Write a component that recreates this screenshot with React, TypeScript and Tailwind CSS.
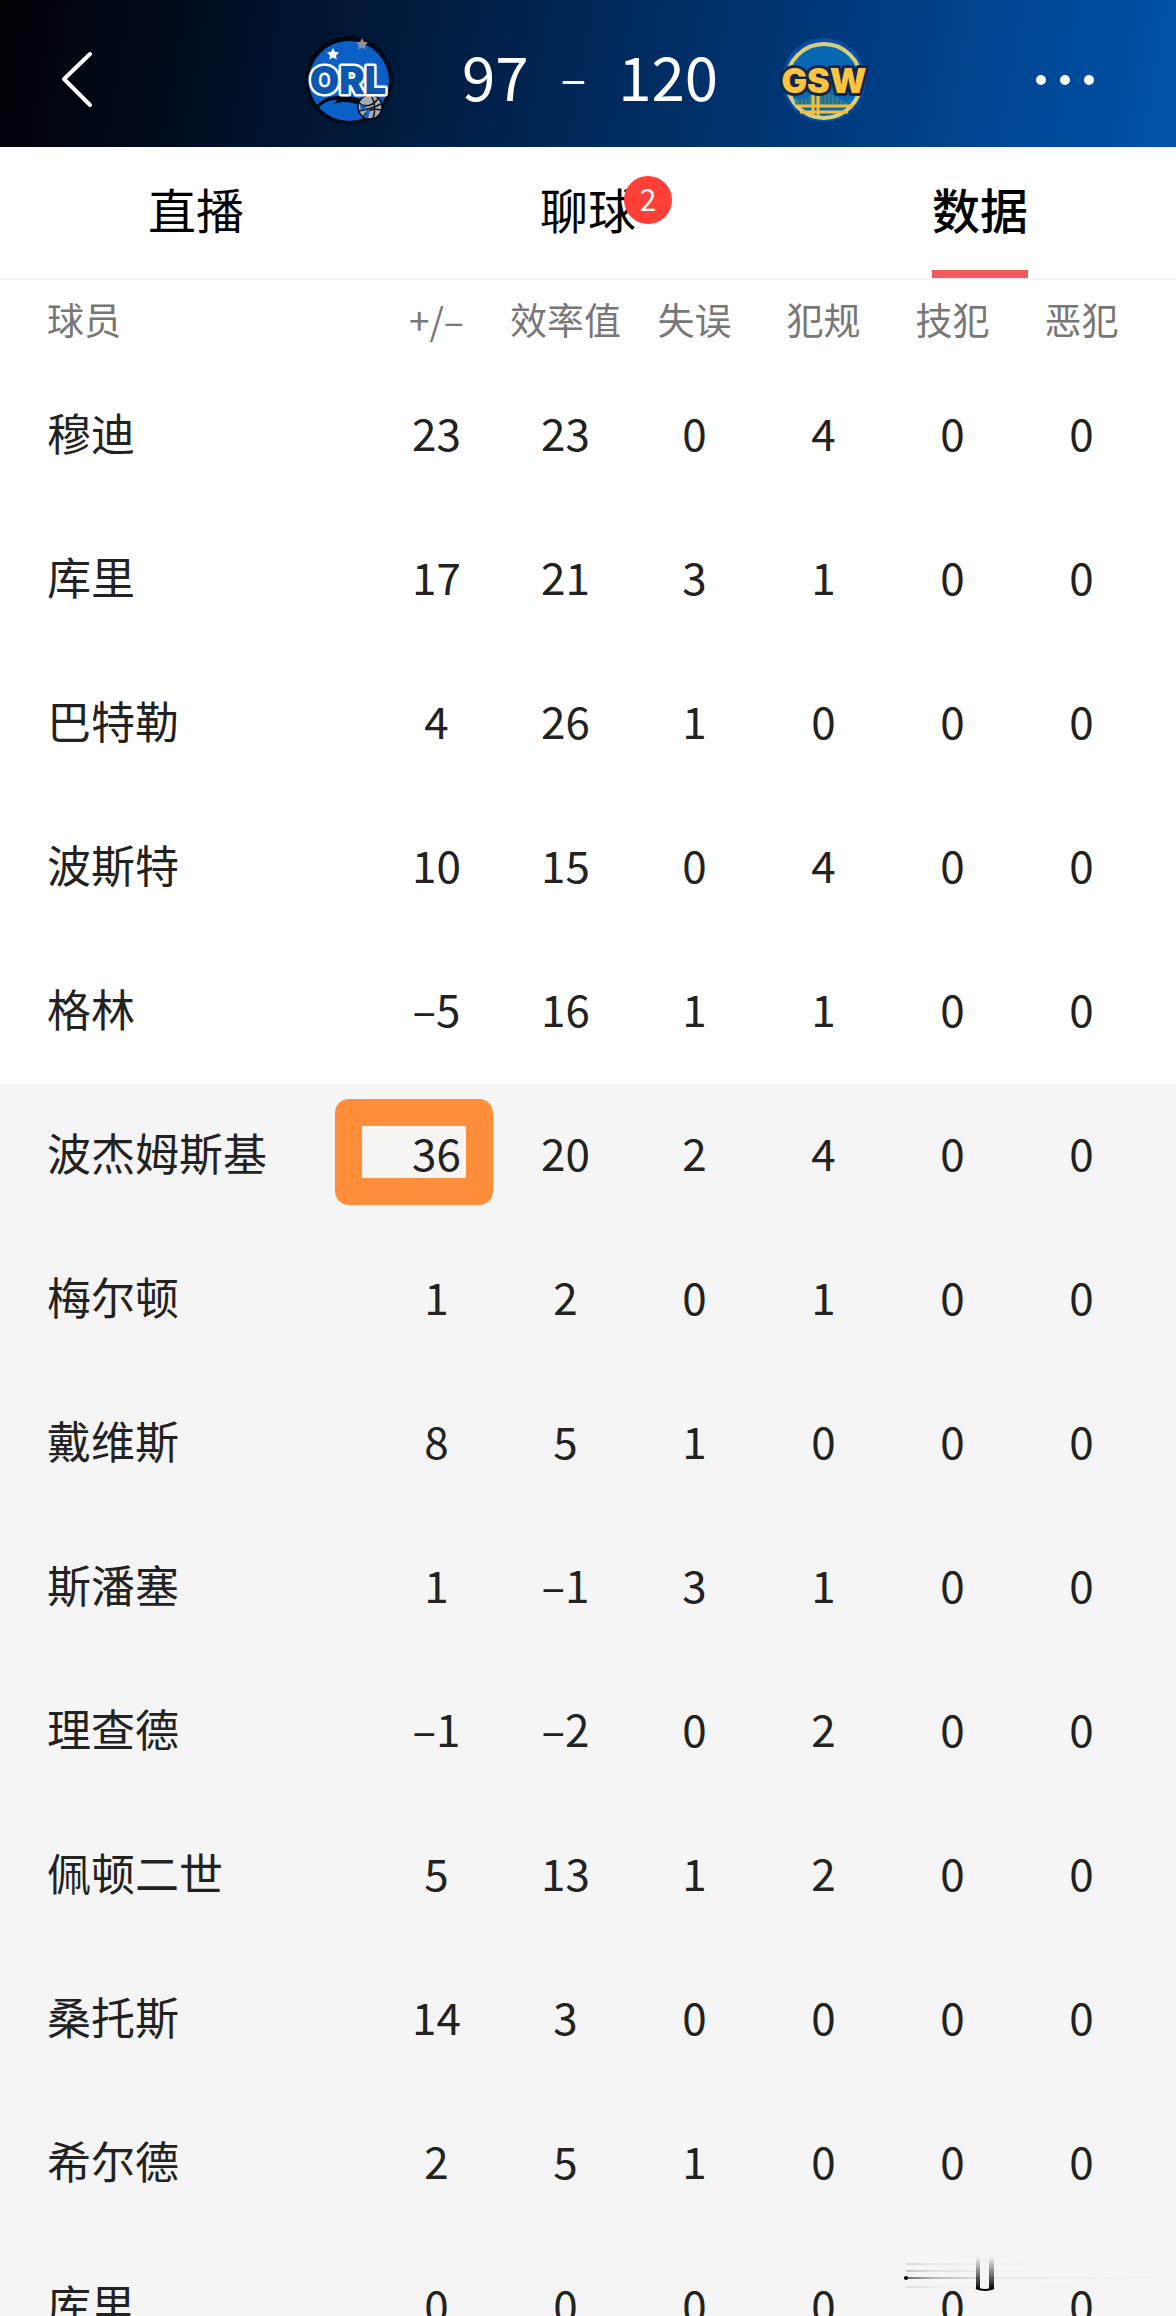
type Row = { name: string; stats: number[]; highlight?: boolean };

const columns = ["+/–", "效率值", "失误", "犯规", "技犯", "恶犯"];

const starters: Row[] = [
  { name: "穆迪", stats: [23, 23, 0, 4, 0, 0] },
  { name: "库里", stats: [17, 21, 3, 1, 0, 0] },
  { name: "巴特勒", stats: [4, 26, 1, 0, 0, 0] },
  { name: "波斯特", stats: [10, 15, 0, 4, 0, 0] },
  { name: "格林", stats: [-5, 16, 1, 1, 0, 0] },
];

const bench: Row[] = [
  { name: "波杰姆斯基", stats: [36, 20, 2, 4, 0, 0], highlight: true },
  { name: "梅尔顿", stats: [1, 2, 0, 1, 0, 0] },
  { name: "戴维斯", stats: [8, 5, 1, 0, 0, 0] },
  { name: "斯潘塞", stats: [1, -1, 3, 1, 0, 0] },
  { name: "理查德", stats: [-1, -2, 0, 2, 0, 0] },
  { name: "佩顿二世", stats: [5, 13, 1, 2, 0, 0] },
  { name: "桑托斯", stats: [14, 3, 0, 0, 0, 0] },
  { name: "希尔德", stats: [2, 5, 1, 0, 0, 0] },
  { name: "库里", stats: [0, 0, 0, 0, 0, 0] },
];

const formatStat = (value: number) => (value < 0 ? `–${-value}` : `${value}`);

const STAR = "M0 -6 L1.8 -2.2 L6 -1.6 L3 1.4 L3.7 5.6 L0 3.6 L-3.7 5.6 L-3 1.4 L-6 -1.6 L-1.8 -2.2 Z";

function OrlLogo() {
  return (
    <svg viewBox="0 0 96 96" className="size-24" role="img" aria-label="ORL">
      <circle cx="48" cy="48" r="44" fill="#020814" />
      <circle cx="48" cy="49" r="40" fill="#0b60c8" />
      <path d={STAR} transform="translate(32 22)" fill="#fff" />
      <path d={STAR} transform="translate(61 12)" fill="#8d9096" />
      <path d="M15 74 Q26 62 42 64 Q56 64 64 70 L62 75 Q46 67 33 72 L36 68 Q26 67 17 76 Z" fill="#020814" />
      <circle cx="69" cy="75" r="12" fill="#a9abb0" stroke="#020814" strokeWidth="1.5" />
      <path d="M58 71 Q68 78 77 67 M58 79 Q70 77 80 72 M70 63 Q76 74 72 87 M62 86 Q66 75 80 78" fill="none" stroke="#10151f" strokeWidth="1.5" />
      <path d="M59 72 L66 75 L60 79 Z M63 84 L66 78 L69 78 L67 86 Z" fill="#0b60c8" />
      <text x="47" y="62" textAnchor="middle" fontFamily="Inter, sans-serif" fontWeight="900" fontSize="38" fill="#0b57b0" stroke="#fff" strokeWidth="5" strokeLinejoin="round" paintOrder="stroke">
        ORL
      </text>
    </svg>
  );
}

function GswLogo() {
  return (
    <svg viewBox="0 0 96 96" className="size-24" role="img" aria-label="GSW">
      <circle cx="48" cy="48" r="42" fill="#0c4fa2" />
      <circle cx="48" cy="49" r="37" fill="#0868b4" stroke="#dccf7a" strokeWidth="4" />
      <path d="M18 66 Q32 70 38 58 Q54 60 74 73 L74 75 L20 75 Z" fill="#2f8197" />
      <path d="M24 66 V75 M28 66 V75 M32 64 V75 M47 62 V75 M51 62 V75 M55 63 V75 M59 65 V75 M63 67 V75 M67 69 V75" stroke="#1b5c80" strokeWidth="1" />
      <path d="M19 74 H77 M24 80 H72" stroke="#f3bd3d" strokeWidth="3" />
      <path d="M37 60 V84 M42 60 V84" stroke="#f3bd3d" strokeWidth="3" />
      <text x="48" y="61" textAnchor="middle" fontFamily="Inter, sans-serif" fontWeight="900" fontSize="34" fill="#fdc53f" stroke="#10284f" strokeWidth="6" strokeLinejoin="round" paintOrder="stroke">
        GSW
      </text>
    </svg>
  );
}

function StreakMark() {
  return (
    <svg viewBox="0 0 250 36" className="pointer-events-none absolute right-[22px] bottom-6 h-9 w-[250px]" aria-hidden="true">
      <defs>
        <linearGradient id="streak" x1="0" x2="1" y1="0" y2="0">
          <stop offset="0" stopColor="#000" />
          <stop offset="0.12" stopColor="#000" stopOpacity="0.4" />
          <stop offset="0.35" stopColor="#000" stopOpacity="0.1" />
          <stop offset="1" stopColor="#000" stopOpacity="0.02" />
        </linearGradient>
        <linearGradient id="pillar" x1="0" x2="0" y1="0" y2="1">
          <stop offset="0" stopColor="#000" stopOpacity="0" />
          <stop offset="1" stopColor="#000" />
        </linearGradient>
      </defs>
      <rect x="2" y="7" width="246" height="2" fill="url(#streak)" opacity="0.12" />
      <rect x="2" y="14" width="246" height="2" fill="url(#streak)" opacity="0.2" />
      <rect x="0" y="21" width="248" height="2" fill="url(#streak)" opacity="0.6" />
      <rect x="2" y="30" width="246" height="2" fill="url(#streak)" opacity="0.1" />
      <circle cx="2" cy="22" r="2" fill="#000" />
      <rect x="76" y="1" width="9" height="33" fill="#f5f5f5" />
      <path d="M72 1 H76 V34 L72 33 Z" fill="url(#pillar)" />
      <path d="M85 1 H90 V33 L85 34 Z" fill="url(#pillar)" />
      <path d="M72 32 Q81 36 90 32" fill="none" stroke="#000" strokeWidth="2" />
    </svg>
  );
}

function PlayerRow({ row }: { row: Row }) {
  return (
    <tr className="h-36">
      <th scope="row" className="pb-2 pl-[47px] text-left font-normal whitespace-nowrap">
        {row.name}
      </th>
      {row.stats.map((value, i) =>
        row.highlight && i === 0 ? (
          <td key={i} className="relative p-0 pb-2 text-center">
            <span className="absolute top-[15px] right-2 h-[106px] w-[158px] rounded-[14px] bg-[#ff8d3a] p-[27px]">
              <span className="block h-full bg-[#f7f5f3]" />
            </span>
            <span className="relative">{formatStat(value)}</span>
          </td>
        ) : (
          <td key={i} className="p-0 pb-2 text-center">
            {formatStat(value)}
          </td>
        ),
      )}
      <td />
    </tr>
  );
}

export default function App() {
  return (
    <div className="relative flex h-screen flex-col overflow-hidden bg-white font-['Noto_Sans_CJK_SC',sans-serif] text-[#222]">
      <header className="flex h-[147px] shrink-0 items-center justify-between bg-[linear-gradient(100deg,#000005_0%,#001c40_36%,#003d83_74%,#0053ab_100%)] pt-3 pr-[60px] pl-14 text-white">
        <button type="button" aria-label="返回" className="flex w-20">
          <svg viewBox="0 0 40 60" className="h-[60px] w-10" fill="none" stroke="#fff" strokeWidth="4" strokeLinecap="round" strokeLinejoin="round">
            <path d="M34 4 L8 29 L34 55" />
          </svg>
        </button>
        <div className="flex items-center">
          <OrlLogo />
          <div className="flex w-[379px] items-center justify-center gap-8 pb-2.5 pl-2 text-[60px] leading-none">
            <span>97</span>
            <span className="text-5xl leading-none">–</span>
            <span>120</span>
          </div>
          <GswLogo />
        </div>
        <button type="button" aria-label="更多" className="flex w-20">
          <svg viewBox="0 0 60 12" className="h-3 w-[60px]" fill="#fff">
            <circle cx="5" cy="6" r="5" />
            <circle cx="29" cy="6" r="5" />
            <circle cx="53" cy="6" r="5" />
          </svg>
        </button>
      </header>

      <nav className="grid h-[133px] shrink-0 grid-cols-3 border-b-2 border-[#f3f3f3] text-5xl text-black">
        <a href="#live" className="flex items-center justify-center pb-2.5">直播</a>
        <a href="#chat" className="flex items-center justify-center pb-2.5">
          <span className="relative">
            聊球
            <span className="absolute -top-2 left-[84px] flex size-12 items-center justify-center rounded-full bg-[#ff3f38] pb-1 text-[30px] leading-none text-white">
              2
            </span>
          </span>
        </a>
        <a href="#stats" aria-current="page" className="relative flex items-center justify-center pb-2.5 font-medium">
          数据
          <span className="absolute bottom-0 h-2 w-24 bg-[#f15b5d]" />
        </a>
      </nav>

      <div className="min-h-0 flex-1 overflow-hidden">
        <table className="w-full table-fixed border-collapse text-[44px] leading-none">
          <colgroup>
            <col />
            {columns.map((c) => (
              <col key={c} className="w-[129px]" />
            ))}
            <col className="w-[30px]" />
          </colgroup>
          <thead>
            <tr className="h-[84px] text-[37px] whitespace-nowrap text-[#777]">
              <th scope="col" className="p-0 pb-1.5 pl-[47px] text-left font-normal">球员</th>
              {columns.map((c) => (
                <th key={c} scope="col" className="p-0 pb-1.5 text-center font-normal">{c}</th>
              ))}
              <td />
            </tr>
          </thead>
          <tbody>
            {starters.map((r) => (
              <PlayerRow key={r.name} row={r} />
            ))}
          </tbody>
          <tbody className="bg-[#f5f5f5]">
            {bench.map((r) => (
              <PlayerRow key={r.name} row={r} />
            ))}
          </tbody>
        </table>
      </div>
      <StreakMark />
    </div>
  );
}
